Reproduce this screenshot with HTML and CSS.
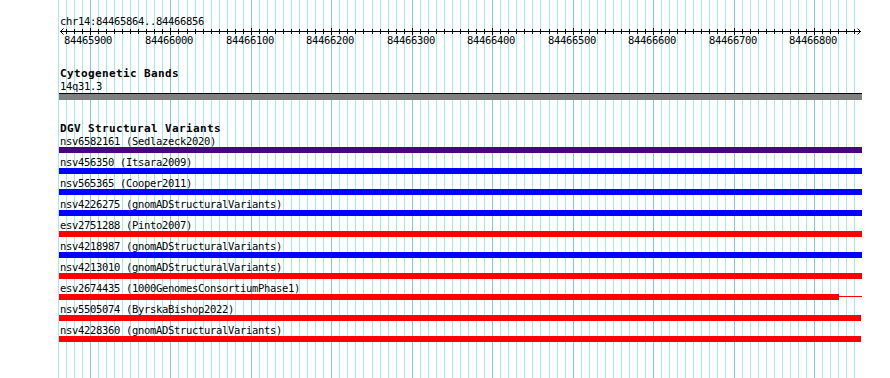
FILE: index.html
```html
<!DOCTYPE html>
<html>
<head>
<meta charset="utf-8">
<title>chr14:84465864..84466856</title>
<link rel="stylesheet" href="styles.css">
</head>
<body>
<div class="page">
  <svg class="grid" width="890" height="378" viewBox="0 0 890 378" aria-hidden="true">
    <path class="grid-minor" d="M58.5 0V378M66.5 0V378M74.5 0V378M82.5 0V378M98.5 0V378M106.5 0V378M114.5 0V378M122.5 0V378M130.5 0V378M138.5 0V378M146.5 0V378M154.5 0V378M162.5 0V378M178.5 0V378M187.5 0V378M195.5 0V378M203.5 0V378M211.5 0V378M219.5 0V378M227.5 0V378M235.5 0V378M243.5 0V378M259.5 0V378M267.5 0V378M275.5 0V378M283.5 0V378M291.5 0V378M299.5 0V378M307.5 0V378M315.5 0V378M323.5 0V378M339.5 0V378M347.5 0V378M355.5 0V378M363.5 0V378M372.5 0V378M380.5 0V378M388.5 0V378M396.5 0V378M404.5 0V378M420.5 0V378M428.5 0V378M436.5 0V378M444.5 0V378M452.5 0V378M460.5 0V378M468.5 0V378M476.5 0V378M484.5 0V378M500.5 0V378M508.5 0V378M516.5 0V378M524.5 0V378M532.5 0V378M540.5 0V378M549.5 0V378M557.5 0V378M565.5 0V378M581.5 0V378M589.5 0V378M597.5 0V378M605.5 0V378M613.5 0V378M621.5 0V378M629.5 0V378M637.5 0V378M645.5 0V378M661.5 0V378M669.5 0V378M677.5 0V378M685.5 0V378M693.5 0V378M701.5 0V378M709.5 0V378M717.5 0V378M725.5 0V378M742.5 0V378M750.5 0V378M758.5 0V378M766.5 0V378M774.5 0V378M782.5 0V378M790.5 0V378M798.5 0V378M806.5 0V378M822.5 0V378M830.5 0V378M838.5 0V378M846.5 0V378M854.5 0V378"/>
    <path class="grid-major" d="M90.5 0V378M170.5 0V378M251.5 0V378M331.5 0V378M412.5 0V378M492.5 0V378M573.5 0V378M653.5 0V378M734.5 0V378M814.5 0V378"/>
  </svg>

  <div class="content">
    <section class="ruler">
      <div class="ruler-title">chr14:84465864..84466856</div>
      <svg class="ruler-axis" width="890" height="6" viewBox="0 0 890 6" aria-hidden="true">
        <path class="axis-line" d="M60 3.5H861"/>
        <path class="axis-line" d="M63.5 0.5L60.5 3.5L63.5 6.5M857.5 0.5L860.5 3.5L857.5 6.5"/>
        <path class="axis-line" d="M66.5 1V6M74.5 1V6M82.5 1V6M98.5 1V6M106.5 1V6M114.5 1V6M122.5 1V6M130.5 1V6M138.5 1V6M146.5 1V6M154.5 1V6M162.5 1V6M178.5 1V6M187.5 1V6M195.5 1V6M203.5 1V6M211.5 1V6M219.5 1V6M227.5 1V6M235.5 1V6M243.5 1V6M259.5 1V6M267.5 1V6M275.5 1V6M283.5 1V6M291.5 1V6M299.5 1V6M307.5 1V6M315.5 1V6M323.5 1V6M339.5 1V6M347.5 1V6M355.5 1V6M363.5 1V6M372.5 1V6M380.5 1V6M388.5 1V6M396.5 1V6M404.5 1V6M420.5 1V6M428.5 1V6M436.5 1V6M444.5 1V6M452.5 1V6M460.5 1V6M468.5 1V6M476.5 1V6M484.5 1V6M500.5 1V6M508.5 1V6M516.5 1V6M524.5 1V6M532.5 1V6M540.5 1V6M549.5 1V6M557.5 1V6M565.5 1V6M581.5 1V6M589.5 1V6M597.5 1V6M605.5 1V6M613.5 1V6M621.5 1V6M629.5 1V6M637.5 1V6M645.5 1V6M661.5 1V6M669.5 1V6M677.5 1V6M685.5 1V6M693.5 1V6M701.5 1V6M709.5 1V6M717.5 1V6M725.5 1V6M742.5 1V6M750.5 1V6M758.5 1V6M766.5 1V6M774.5 1V6M782.5 1V6M790.5 1V6M798.5 1V6M806.5 1V6M822.5 1V6M830.5 1V6M838.5 1V6M846.5 1V6M854.5 1V6"/>
        <path class="axis-line" d="M90.5 0V7M170.5 0V7M251.5 0V7M331.5 0V7M412.5 0V7M492.5 0V7M573.5 0V7M653.5 0V7M734.5 0V7M814.5 0V7"/>
      </svg>
      <div class="tick-labels">
        <span class="tick-label" style="left:64px">84465900</span>
        <span class="tick-label" style="left:145px">84466000</span>
        <span class="tick-label" style="left:226px">84466100</span>
        <span class="tick-label" style="left:306px">84466200</span>
        <span class="tick-label" style="left:387px">84466300</span>
        <span class="tick-label" style="left:467px">84466400</span>
        <span class="tick-label" style="left:548px">84466500</span>
        <span class="tick-label" style="left:628px">84466600</span>
        <span class="tick-label" style="left:709px">84466700</span>
        <span class="tick-label" style="left:789px">84466800</span>
      </div>
    </section>

    <section class="track track-cyto">
      <h2 class="track-title">Cytogenetic Bands</h2>
      <div class="feature-label cyto-label">14q31.3</div>
      <div class="cytoband"></div>
    </section>

    <section class="track track-dgv">
      <h2 class="track-title">DGV Structural Variants</h2>

      <div class="feature">
        <div class="feature-label">nsv6582161 (Sedlazeck2020)</div>
        <div class="feature-bar bar-indigo bar-long"></div>
      </div>
      <div class="feature">
        <div class="feature-label">nsv456350 (Itsara2009)</div>
        <div class="feature-bar bar-blue bar-long"></div>
      </div>
      <div class="feature">
        <div class="feature-label">nsv565365 (Cooper2011)</div>
        <div class="feature-bar bar-blue bar-long"></div>
      </div>
      <div class="feature">
        <div class="feature-label">nsv4226275 (gnomADStructuralVariants)</div>
        <div class="feature-bar bar-blue bar-long"></div>
      </div>
      <div class="feature">
        <div class="feature-label">esv2751288 (Pinto2007)</div>
        <div class="feature-bar bar-red bar-long"></div>
      </div>
      <div class="feature">
        <div class="feature-label">nsv4218987 (gnomADStructuralVariants)</div>
        <div class="feature-bar bar-blue bar-long"></div>
      </div>
      <div class="feature">
        <div class="feature-label">nsv4213010 (gnomADStructuralVariants)</div>
        <div class="feature-bar bar-red bar-long"></div>
      </div>
      <div class="feature">
        <div class="feature-label">esv2674435 (1000GenomesConsortiumPhase1)</div>
        <div class="feature-bar bar-split">
          <div class="bar-red bar-solid" style="width:780px"></div>
          <div class="bar-thin"></div>
        </div>
      </div>
      <div class="feature">
        <div class="feature-label">nsv5505074 (ByrskaBishop2022)</div>
        <div class="feature-bar bar-red"></div>
      </div>
      <div class="feature">
        <div class="feature-label">nsv4228360 (gnomADStructuralVariants)</div>
        <div class="feature-bar bar-red"></div>
      </div>
    </section>
  </div>
</div>
</body>
</html>
```

FILE: styles.css
```css
* {
  box-sizing: border-box;
}

html, body {
  margin: 0;
  padding: 0;
  background: #ffffff;
}

body {
  font-family: "DejaVu Sans Mono", "Liberation Mono", monospace;
  font-size: 10.5px;
  letter-spacing: -0.32px;
  color: #000000;
}

.page {
  position: relative;
  width: 890px;
  height: 378px;
  overflow: hidden;
  background: #ffffff;
}

.grid {
  position: absolute;
  top: 0;
  left: 0;
  display: block;
}

.grid-minor {
  stroke: #a6e8ef;
  stroke-width: 1;
  fill: none;
}

.grid-major {
  stroke: #7ec6ea;
  stroke-width: 1;
  fill: none;
}

.content {
  position: relative;
  padding-top: 15px;
}

.ruler-title {
  margin-left: 60px;
  height: 13px;
  line-height: 13px;
  white-space: nowrap;
}

.ruler-axis {
  display: block;
  overflow: visible;
}

.axis-line {
  stroke: #000000;
  stroke-width: 1;
  fill: none;
}

.tick-labels {
  position: relative;
  height: 13px;
  line-height: 13px;
}

.tick-label {
  position: absolute;
  top: 0;
  white-space: nowrap;
}

.track {
  display: flex;
  flex-direction: column;
}

.track-cyto {
  margin-top: 20px;
}

.track-dgv {
  margin-top: 22px;
}

.track-title {
  margin: 0 0 0 60px;
  height: 13px;
  line-height: 13px;
  font-size: 11px;
  font-weight: bold;
  letter-spacing: 0.38px;
  white-space: nowrap;
}

.feature-label {
  margin-left: 60px;
  height: 12px;
  line-height: 13px;
  white-space: nowrap;
}

.cyto-label {
  height: 13px;
}

.cytoband {
  margin-left: 59px;
  width: 803px;
  height: 7px;
  border-top: 1px solid #000000;
  background: #808080;
}

.feature {
  display: flex;
  flex-direction: column;
  margin-bottom: 3px;
}

.feature-bar {
  margin-left: 59px;
  width: 802px;
  height: 6px;
}

.bar-long {
  width: 803px;
}

.bar-indigo {
  background: #4b0082;
}

.bar-blue {
  background: #0000ff;
}

.bar-red {
  background: #ff0000;
}

.bar-split {
  display: flex;
  align-items: center;
  width: 803px;
}

.bar-solid {
  height: 6px;
  flex: none;
}

.bar-thin {
  flex: 1;
  height: 1px;
  background: #ff0000;
  margin-top: -1px;
}
```
